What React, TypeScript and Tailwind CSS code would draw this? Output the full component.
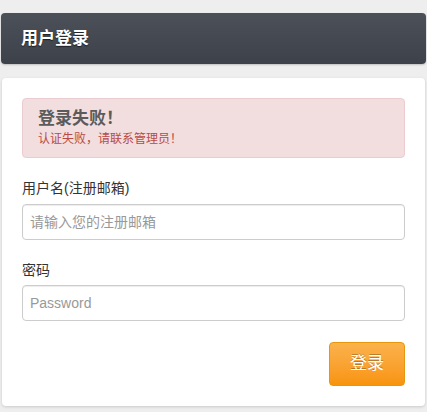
import React from 'react'

const font = "font-['Liberation_Sans','Noto_Sans_CJK_SC',sans-serif]"

export default function App() {
  return (
    <div className={`min-h-[412px] bg-[#eeeeee] px-px pt-[13px] ${font}`}>
      <div className="flex h-[51px] items-center rounded-[4px] bg-gradient-to-b from-[#4b5059] to-[#3d414a] px-5 shadow-[0_1px_2px_rgba(0,0,0,0.2)]">
        <h1 className="text-[17px] font-bold leading-none text-white [text-shadow:0_1px_1px_rgba(0,0,0,0.6)]">
          用户登录
        </h1>
      </div>

      <div className="mx-px mt-[14px] h-[328px] rounded-[4px] bg-white px-5 pt-5 shadow-[0_1px_3px_rgba(0,0,0,0.15)]">
        <div className="flex h-[60px] flex-col justify-center rounded-[4px] border border-[#ebccd1] bg-[#f2dede] px-[15px]">
          <div className="text-[17px] font-bold leading-[22px] text-[#5b5b5b]">登录失败！</div>
          <div className="text-[12px] leading-[18px] text-[#b94a48]">认证失败，请联系管理员！</div>
        </div>

        <form className="mt-[20px]" onSubmit={(e) => e.preventDefault()}>
          <label className="block text-[14px] leading-[20px] text-[#333]">用户名(注册邮箱)</label>
          <input
            type="text"
            placeholder="请输入您的注册邮箱"
            className="mt-[6px] block h-[36px] w-full rounded-[4px] border border-[#cccccc] px-[7px] text-[14px] text-[#555] shadow-[inset_0_1px_1px_rgba(0,0,0,0.075)] outline-none placeholder:text-[#999]"
          />

          <label className="mt-[20px] block text-[14px] leading-[20px] text-[#333]">密码</label>
          <input
            type="password"
            placeholder="Password"
            className="mt-[5px] block h-[36px] w-full rounded-[4px] border border-[#cccccc] px-[7px] text-[14px] text-[#555] shadow-[inset_0_1px_1px_rgba(0,0,0,0.075)] outline-none placeholder:text-[#999]"
          />

          <div className="mt-[21px] flex justify-end">
            <button
              type="submit"
              className="h-[44px] w-[76px] rounded-[4px] border border-[#e8960f] bg-gradient-to-b from-[#fbb24b] to-[#f89406] text-[17px] text-white [text-shadow:0_-1px_0_rgba(0,0,0,0.25)]"
            >
              登录
            </button>
          </div>
        </form>
      </div>
    </div>
  )
}
